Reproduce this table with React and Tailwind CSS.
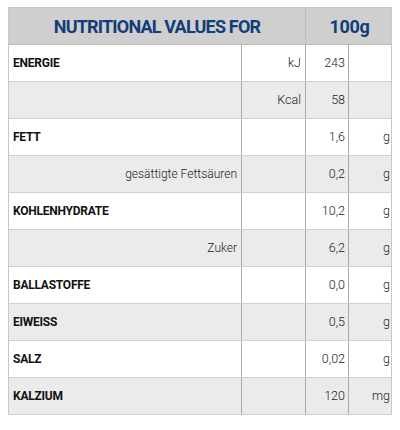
const ROWS = [
  { label: 'ENERGIE', bold: true, unitLabel: 'kJ', value: '243', unit: '' },
  { label: '', bold: false, unitLabel: 'Kcal', value: '58', unit: '' },
  { label: 'FETT', bold: true, unitLabel: '', value: '1,6', unit: 'g' },
  { label: 'gesättigte Fettsäuren', bold: false, unitLabel: '', value: '0,2', unit: 'g' },
  { label: 'KOHLENHYDRATE', bold: true, unitLabel: '', value: '10,2', unit: 'g' },
  { label: 'Zuker', bold: false, unitLabel: '', value: '6,2', unit: 'g' },
  { label: 'BALLASTOFFE', bold: true, unitLabel: '', value: '0,0', unit: 'g' },
  { label: 'EIWEISS', bold: true, unitLabel: '', value: '0,5', unit: 'g' },
  { label: 'SALZ', bold: true, unitLabel: '', value: '0,02', unit: 'g' },
  { label: 'KALZIUM', bold: true, unitLabel: '', value: '120', unit: 'mg' },
];

export default function App() {
  return (
    <div className="w-[400px] h-[430px] bg-white pt-[7px] pl-2 font-['Roboto',sans-serif]">
      <div className="w-[384px] border border-[#c8c8c8] border-b-0">
        {/* Header */}
        <div className="grid grid-cols-[297px_87px] h-[37px] bg-[#cfcfcf] border-b border-[#bdbdbd]">
          <div className="flex items-center justify-center border-r border-[#bdbdbd] text-[18px] font-bold text-[#123d78] tracking-[-0.045em]">
            NUTRITIONAL VALUES FOR
          </div>
          <div className="flex items-center justify-center text-[18px] font-bold text-[#123d78] tracking-[-0.02em]">
            100g
          </div>
        </div>

        {/* Rows */}
        {ROWS.map((row, i) => (
          <div
            key={i}
            className={`grid grid-cols-[233px_64px_43px_44px] h-[37px] border-b border-[#cfcfcf] ${
              i % 2 === 1 ? 'bg-[#ebebeb]' : 'bg-white'
            }`}
          >
            <div
              className={`flex items-center border-r border-[#a9a9a9] ${
                row.bold
                  ? 'pl-1 text-[12px] font-bold text-[#111] tracking-[-0.02em]'
                  : 'justify-end pr-1 text-[12px] text-[#222] font-light'
              }`}
            >
              {row.label}
            </div>
            <div className="flex items-center justify-end pr-1 border-r border-[#a9a9a9] text-[12.5px] text-[#222] font-light">
              {row.unitLabel}
            </div>
            <div className="flex items-center justify-end pr-[3px] border-r border-[#a9a9a9] text-[12.5px] text-[#222] font-light">
              {row.value}
            </div>
            <div className="flex items-center justify-end pr-[3px] text-[12.5px] text-[#222] font-light">
              {row.unit}
            </div>
          </div>
        ))}
      </div>
    </div>
  );
}
